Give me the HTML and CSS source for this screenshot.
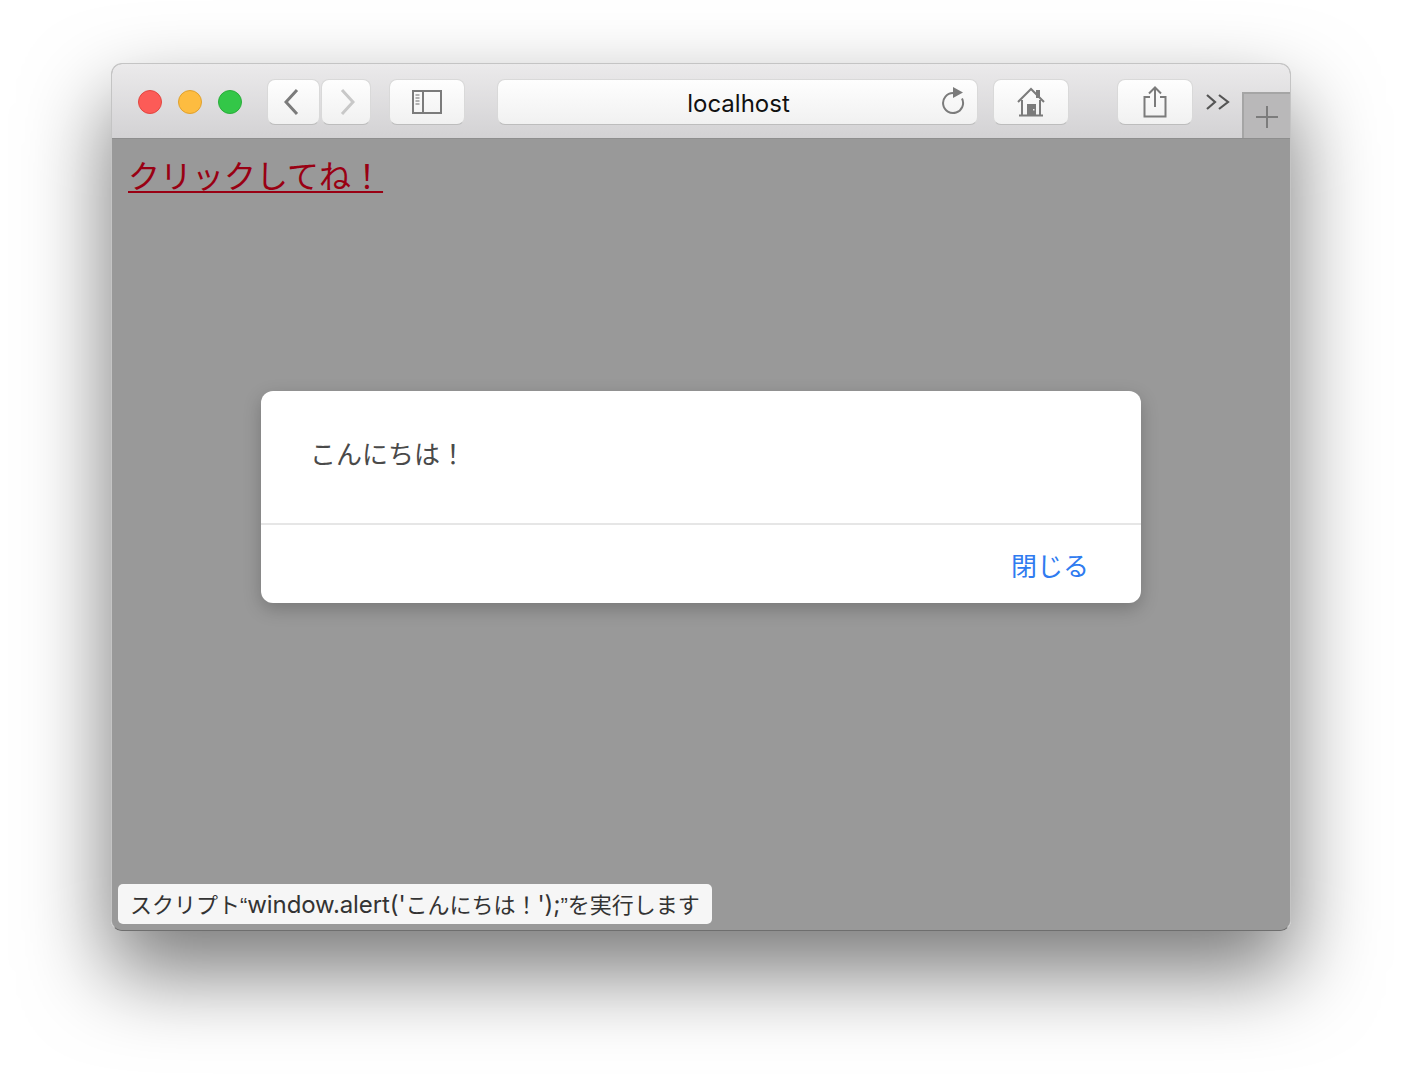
FILE: index.html
```html
<!DOCTYPE html>
<html lang="ja">
<head>
<meta charset="utf-8">
<title>localhost</title>
<link rel="stylesheet" href="styles.css">
</head>
<body>
<div class="window">
  <header class="toolbar">
    <div class="lights">
      <span class="light red"></span>
      <span class="light yellow"></span>
      <span class="light green"></span>
    </div>
    <div class="nav">
      <span class="btn nav-btn nav-prev"><svg width="16" height="28" viewBox="0 0 16 28"><path d="M13 2 2 14l11 12" fill="none" stroke="#7b7b7b" stroke-width="3"/></svg></span>
      <span class="btn nav-btn nav-next"><svg width="16" height="28" viewBox="0 0 16 28"><path d="M3 2l11 12L3 26" fill="none" stroke="#c8c8c8" stroke-width="3"/></svg></span>
    </div>
    <span class="btn wide sidebar-btn"><svg width="30" height="24" viewBox="0 0 30 24"><path d="M1 1h28v22H1zM11 1v22" fill="none" stroke="#7b7b7b" stroke-width="2"/><path d="M3.500 5h4M3.500 8h4M3.500 11h4M3.500 14h4" stroke="#9a9a9a" stroke-width="1.500"/></svg></span>
    <div class="btn address">
      <span class="url">localhost</span>
      <svg class="reload" width="24" height="28" viewBox="0 0 24 28"><path d="M12 6A10 10 0 1 0 21 11.500" fill="none" stroke="#7b7b7b" stroke-width="2"/><path d="M12 0l10 5.500L12 11z" fill="#7b7b7b"/></svg>
    </div>
    <span class="btn wide home-btn"><svg width="28" height="30" viewBox="0 0 28 30"><path d="M1 15 14 2l13 13" fill="none" stroke="#7b7b7b" stroke-width="2"/><path d="M19 3h4v8h-4z" fill="#7b7b7b"/><path d="M5 13v15M23 13v15M2 28.500h24" fill="none" stroke="#7b7b7b" stroke-width="2"/><path d="M10 17h9v11h-9z" fill="#7b7b7b"/><path d="M16 22h1.500v1.500H16z" fill="#e8e8e8"/></svg></span>
    <span class="btn wide share-btn"><svg width="24" height="32" viewBox="0 0 24 32"><path d="M7 11H1.500v19.500h21V11H17M12 21V2M6 7.500 12 1.500l6 6" fill="none" stroke="#7b7b7b" stroke-width="2"/></svg></span>
    <svg class="more" width="24" height="18" viewBox="0 0 24 18"><path d="M1 2l8 7-8 7M13 2l9 7-9 7" fill="none" stroke="#555" stroke-width="2.200"/></svg>
    <span class="new-tab"><svg width="24" height="24" viewBox="0 0 24 24"><path d="M12 1v22M1 12h22" stroke="#7c7c7c" stroke-width="2"/></svg></span>
  </header>
  <main class="page">
    <a class="link" href="#">クリックしてね！</a>
    <div class="overlay">
      <div class="dialog">
        <p class="message">こんにちは！</p>
        <div class="actions"><a class="close" href="#">閉じる</a></div>
      </div>
    </div>
    <div class="status">スクリプト“<span class="latin">window.alert('</span>こんにちは！<span class="latin">');</span>”を実行します</div>
  </main>
</div>
</body>
</html>
```
FILE: styles.css
```css
* { box-sizing: border-box; }
html, body { margin: 0; height: 100%; }
body {
  background: #fff;
  padding: 63px 111px 0;
  overflow: hidden;
  font-family: "Liberation Sans", "Noto Sans CJK JP", sans-serif;
}
body::before {
  content: "";
  position: absolute;
  left: 111px; top: 63px;
  width: 1180px; height: 868px;
  border-radius: 11px;
  box-shadow: 0 40px 84px 2px rgba(0,0,0,.52);
}
.window {
  width: 1180px;
  height: 868px;
  border-radius: 11px;
  border: 1px solid #c4c4c4;
  border-bottom-color: #6e6e6e;
  background: #999;
  display: flex;
  flex-direction: column;
  overflow: hidden;
  position: relative;
}
.toolbar {
  height: 74px;
  flex: none;
  display: flex;
  align-items: flex-start;
  background: linear-gradient(#ebeaeb, #d3d2d4);
  padding: 15px 0 0 26px;
  position: relative;
}
.lights { display: flex; gap: 16px; margin-top: 11px; }
.light { width: 24px; height: 24px; border-radius: 50%; border: 1px solid; }
.red { background: #fc5b57; border-color: #e24640; }
.yellow { background: #fdbc40; border-color: #e0a12d; }
.green { background: #33c748; border-color: #2aad3a; }
.btn {
  height: 46px;
  background: linear-gradient(#fefefe, #f1f1f1);
  border-radius: 8px;
  border: 1px solid #d9d9d9;
  border-bottom-color: #bdbdbd;
  display: flex;
  align-items: center;
  justify-content: center;
  flex: none;
}
.nav { display: flex; margin-left: 25px; }
.nav-prev { width: 53px; padding-right: 4px; }
.nav-next { width: 50px; margin-left: 1px; padding-left: 2px; }
.wide { width: 76px; }
.sidebar-btn { margin-left: 18px; }
.address {
  width: 481px;
  margin-left: 32px;
  position: relative;
}
.url { font-family: Inter, "Liberation Sans", sans-serif; font-size: 24px; color: #111; margin-left: 2px; margin-top: 2px; }
.reload { position: absolute; right: 12px; top: 7px; }
.home-btn { margin-left: 15px; }
.share-btn { margin-left: 48px; }
.more { margin: 14px 0 0 13px; flex: none; }
.new-tab {
  position: absolute;
  right: 0; bottom: 0;
  width: 48px; height: 46px;
  background: #b9b8b9;
  border-top: 2px solid #a5a5a5;
  border-left: 2px solid #a5a5a5;
  display: flex;
  align-items: center;
  justify-content: center;
  padding-top: 2px;
}
.page {
  flex: 1;
  position: relative;
  padding: 16px;
  border-top: 1px solid #8e8e8e;
}
.link {
  font-family: "Liberation Serif", "Noto Sans CJK JP", serif;
  font-size: 32px;
  line-height: 45px;
  text-decoration: underline;
  text-decoration-thickness: 2px;
  text-underline-offset: 3px;
  color: #990013;
  position: relative;
  z-index: 2;
}
.overlay {
  position: absolute;
  inset: 0;
  background: #999;
  display: flex;
  align-items: flex-start;
  justify-content: center;
  padding-top: 252px;
}
.dialog {
  width: 880px;
  height: 212px;
  background: #fff;
  border-radius: 12px;
  box-shadow: 0 6px 18px rgba(0,0,0,.22);
  display: flex;
  flex-direction: column;
}
.message {
  margin: 0;
  height: 134px;
  flex: none;
  padding: 46px 49px 0;
  font-size: 26px;
  line-height: 36px;
  color: #4a4a4a;
  border-bottom: 2px solid #e6e6e6;
}
.actions {
  flex: 1;
  display: flex;
  justify-content: flex-end;
  align-items: center;
  padding: 5px 52px 0 0;
}
.close {
  font-size: 26px;
  line-height: 36px;
  color: #2f7bf0;
  text-decoration: none;
}
.status {
  position: absolute;
  left: 6px;
  bottom: 6px;
  height: 40px;
  padding: 0 12px;
  background: #f6f6f6;
  border-radius: 5px;
  font-size: 22px;
  line-height: 42px;
  color: #333;
  white-space: nowrap;
}
.latin { font-family: Inter, "Liberation Sans", sans-serif; font-size: 24px; letter-spacing: -.1px; }
```
